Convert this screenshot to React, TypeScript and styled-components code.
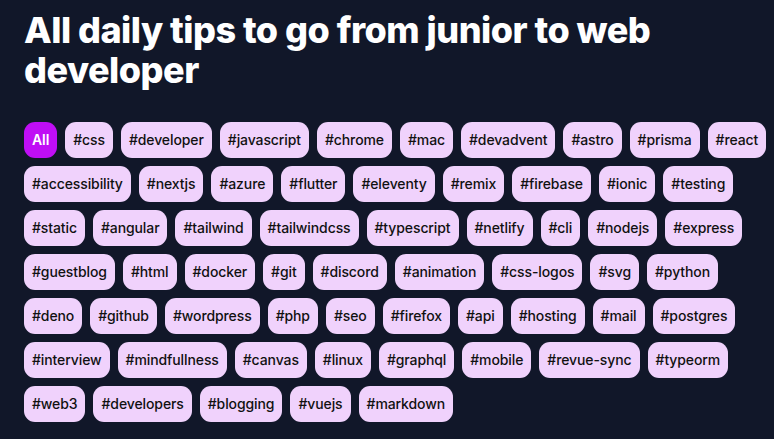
import React from "react";
import styled, { createGlobalStyle } from "styled-components";

const Global = createGlobalStyle`
  html, body { margin: 0; padding: 0; background: #111729; }
  body { font-family: Inter, "Noto Sans", sans-serif; }
`;

const Page = styled.main`
  min-height: 439px;
  box-sizing: border-box;
  padding: 10px 0 0 24px;
  background: #111729;
`;

const Title = styled.h1`
  margin: 0;
  color: #ffffff;
  font-size: 36px;
  line-height: 40px;
  font-weight: 800;
  letter-spacing: -0.5px;
`;

const TagList = styled.ul`
  list-style: none;
  margin: 32px 0 0;
  padding: 0;
  display: flex;
  flex-wrap: wrap;
  gap: 8px;
`;

const Tag = styled.li<{ $active?: boolean }>`
  padding: 8px;
  border-radius: 11px;
  font-size: 14px;
  line-height: 20px;
  letter-spacing: -0.1px;
  font-weight: ${(p) => (p.$active ? 600 : 500)};
  background: ${(p) => (p.$active ? "#c00ef5" : "#f0d2fc")};
  color: ${(p) => (p.$active ? "#ffffff" : "#111111")};
`;

const tags = [
  "css", "developer", "javascript", "chrome", "mac", "devadvent", "astro", "prisma", "react",
  "accessibility", "nextjs", "azure", "flutter", "eleventy", "remix", "firebase", "ionic", "testing",
  "static", "angular", "tailwind", "tailwindcss", "typescript", "netlify", "cli", "nodejs", "express",
  "guestblog", "html", "docker", "git", "discord", "animation", "css-logos", "svg", "python",
  "deno", "github", "wordpress", "php", "seo", "firefox", "api", "hosting", "mail", "postgres",
  "interview", "mindfullness", "canvas", "linux", "graphql", "mobile", "revue-sync", "typeorm",
  "web3", "developers", "blogging", "vuejs", "markdown",
];

export default function App() {
  return (
    <>
      <Global />
      <Page>
        <Title>All daily tips to go from junior to web developer</Title>
        <TagList>
          <Tag $active>All</Tag>
          {tags.map((t) => (
            <Tag key={t}>#{t}</Tag>
          ))}
        </TagList>
      </Page>
    </>
  );
}
